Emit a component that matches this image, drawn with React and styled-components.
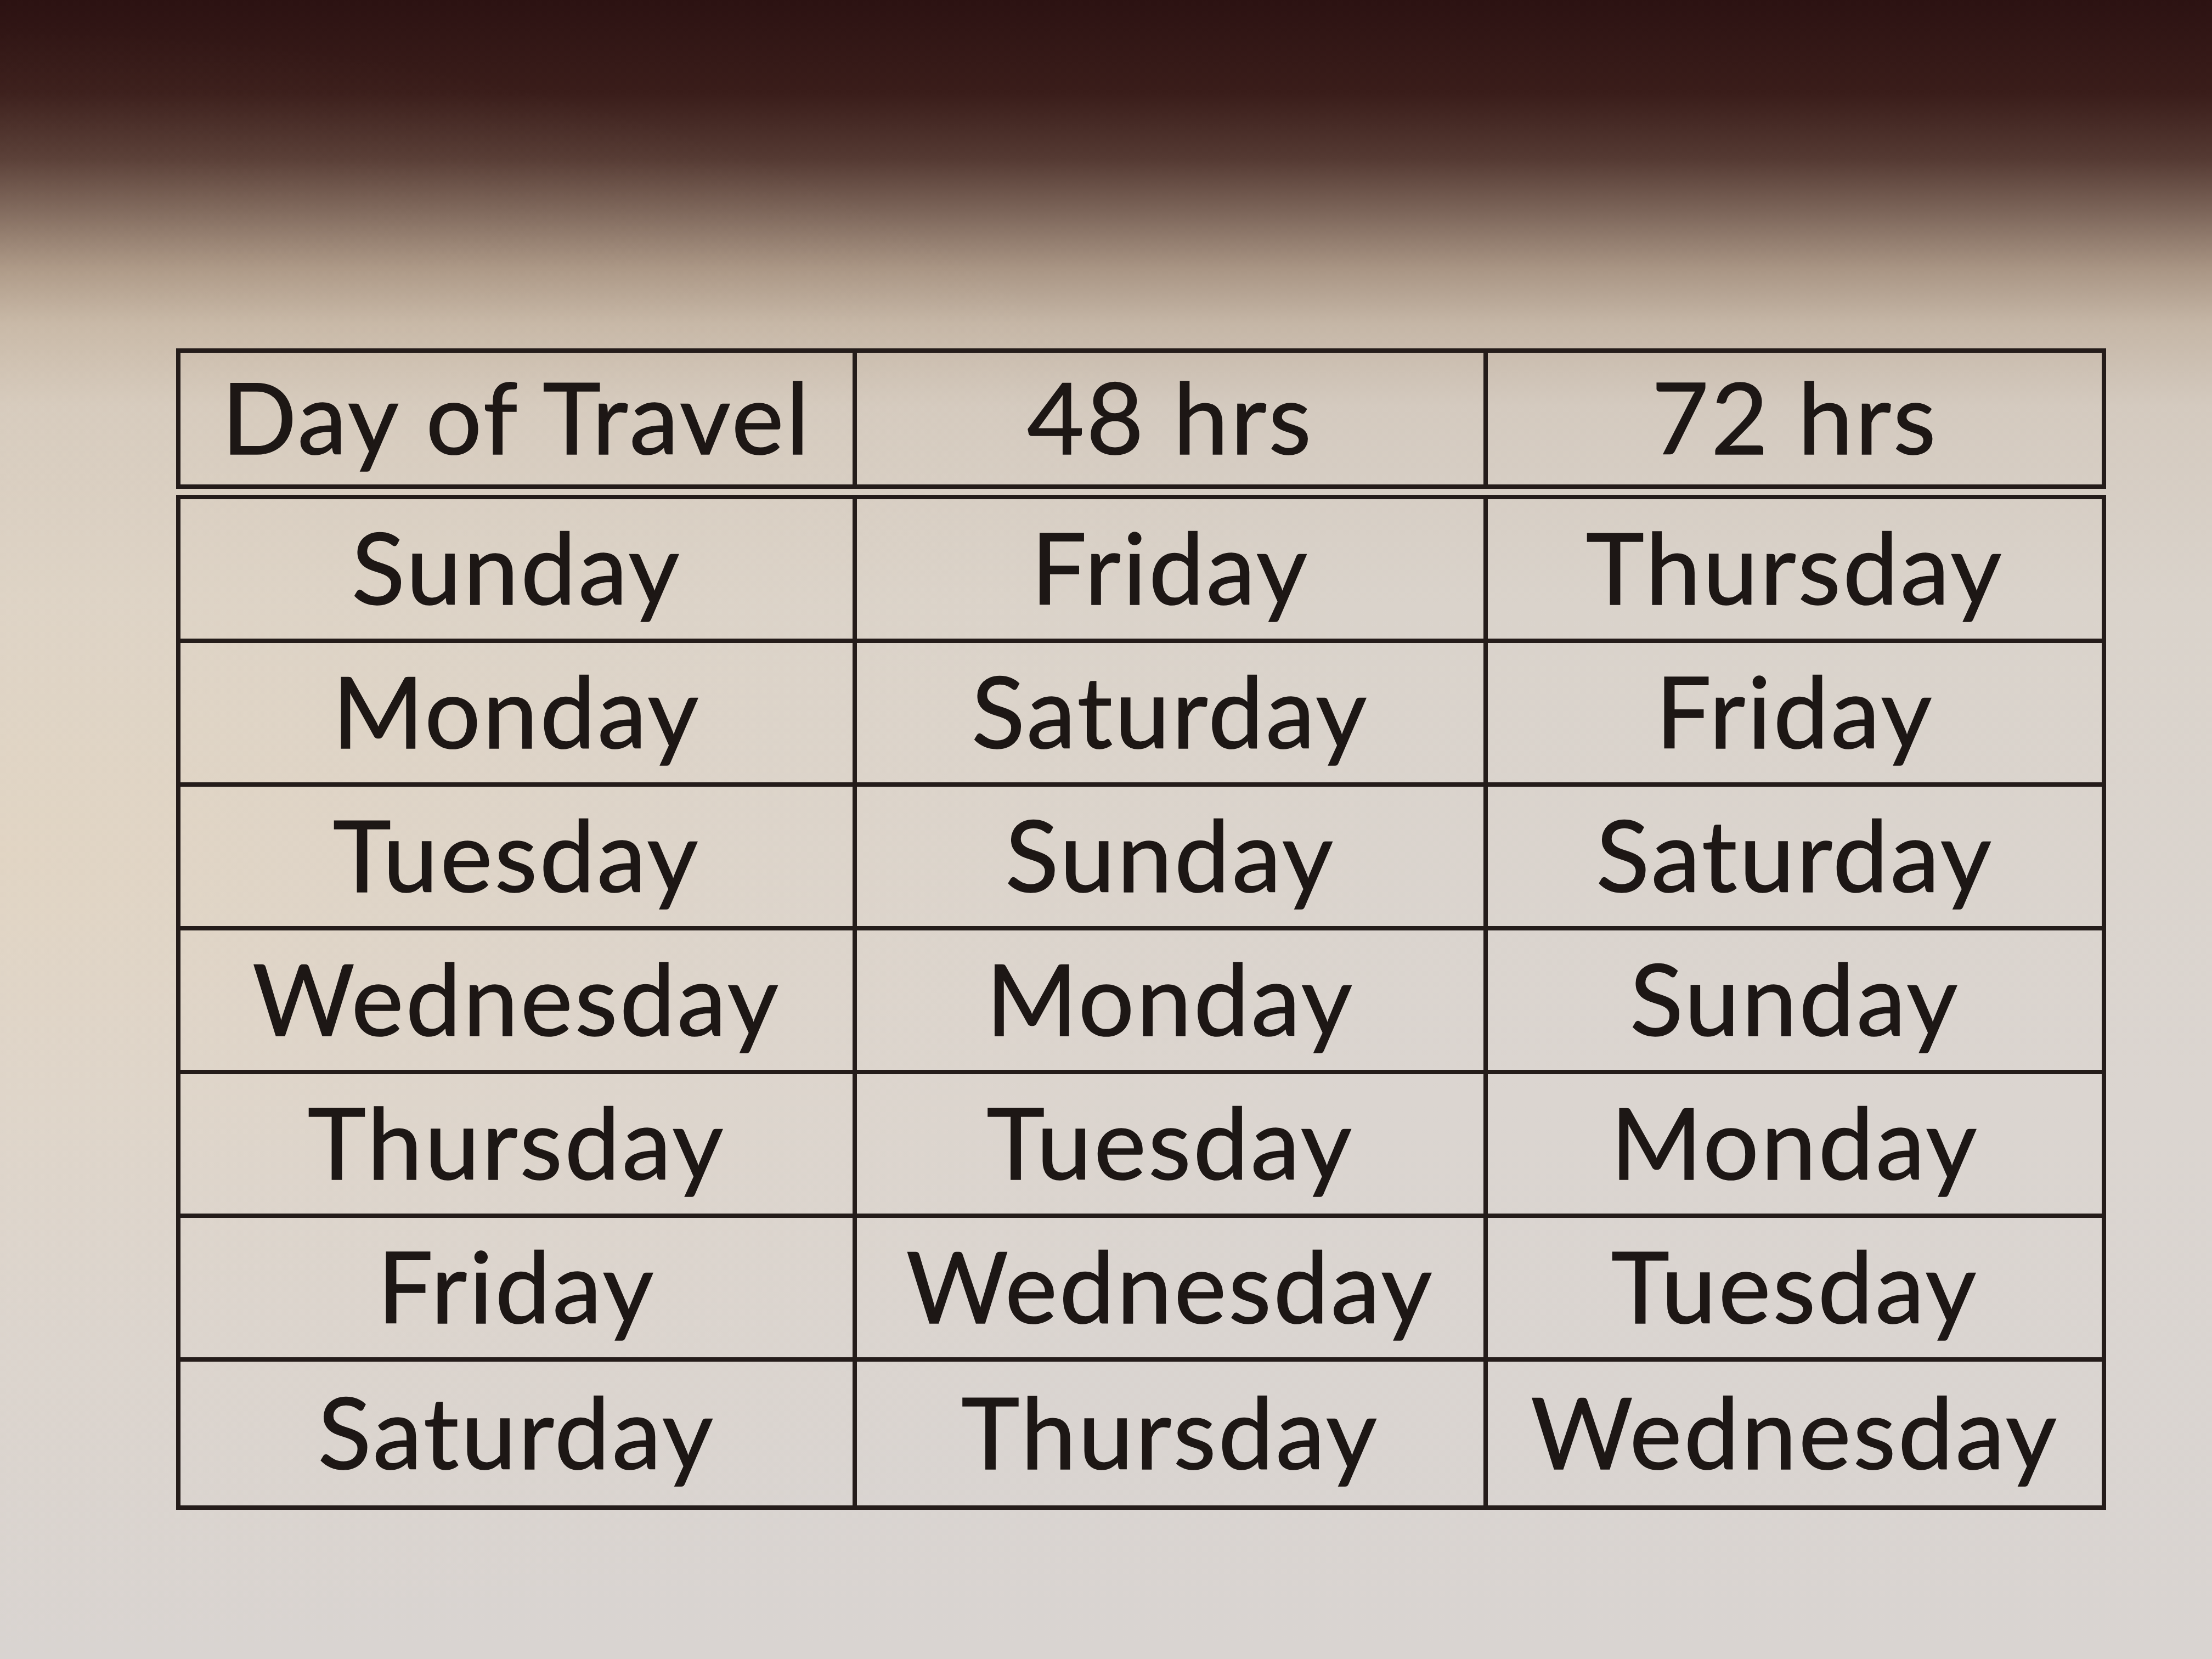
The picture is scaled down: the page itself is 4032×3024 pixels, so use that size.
import React from "react";
import styled, { createGlobalStyle } from "styled-components";

const GlobalStyle = createGlobalStyle`
  html, body {
    margin: 0;
    padding: 0;
  }
  body {
    font-family: Lato, "Open Sans", sans-serif;
  }
`;

// paper photographed under warm light: dark edge at the top, cream on the left
const Page = styled.div`
  width: 4032px;
  height: 3024px;
  box-sizing: border-box;
  padding: 635px 0 0 321px;
  background:
    radial-gradient(
      2600px 1500px at 0px 1550px,
      rgba(236, 214, 180, 0.38) 0%,
      rgba(236, 214, 180, 0.14) 50%,
      rgba(236, 214, 180, 0) 100%
    ),
    linear-gradient(
      180deg,
      #2c1212 0px,
      #3a1d1a 170px,
      #553a33 290px,
      #7e675b 390px,
      #a99584 490px,
      #c5b6a6 590px,
      #d4cabf 740px,
      #dad3cb 1100px,
      #dbd5d0 2000px,
      #d9d4d1 3024px
    );
  overflow: hidden;
`;

const Box = styled.div`
  width: 3518px;
  box-sizing: border-box;
  border: 8px solid #241c1a;
  display: grid;
  grid-template-columns: 1233px 1150px 1fr;
  grid-auto-rows: ${(props) => props.rowHeight}px;
  margin-bottom: ${(props) => props.gapAfter || 0}px;
`;

const Cell = styled.div`
  display: flex;
  align-items: center;
  justify-content: center;
  padding-bottom: 10px;
  color: #1d1715;
  font-size: 180px;
  letter-spacing: 4px;
  -webkit-text-stroke: 1.5px #1d1715;
  line-height: 1;
  white-space: nowrap;
  border-right: ${(props) => (props.lastCol ? "none" : "8px solid #241c1a")};
  border-bottom: ${(props) => (props.lastRow ? "none" : "8px solid #241c1a")};
`;

const header = ["Day of Travel", "48 hrs", "72 hrs"];

const rows = [
  ["Sunday", "Friday", "Thursday"],
  ["Monday", "Saturday", "Friday"],
  ["Tuesday", "Sunday", "Saturday"],
  ["Wednesday", "Monday", "Sunday"],
  ["Thursday", "Tuesday", "Monday"],
  ["Friday", "Wednesday", "Tuesday"],
  ["Saturday", "Thursday", "Wednesday"],
];

export default function App() {
  return (
    <>
      <GlobalStyle />
      <Page>
        <Box rowHeight={240} gapAfter={11}>
          {header.map((h, i) => (
            <Cell key={h} lastCol={i === 2} lastRow>
              {h}
            </Cell>
          ))}
        </Box>
        <Box rowHeight={262}>
          {rows.map((row, r) =>
            row.map((day, c) => (
              <Cell
                key={r + "-" + c}
                lastCol={c === 2}
                lastRow={r === rows.length - 1}
              >
                {day}
              </Cell>
            ))
          )}
        </Box>
      </Page>
    </>
  );
}
